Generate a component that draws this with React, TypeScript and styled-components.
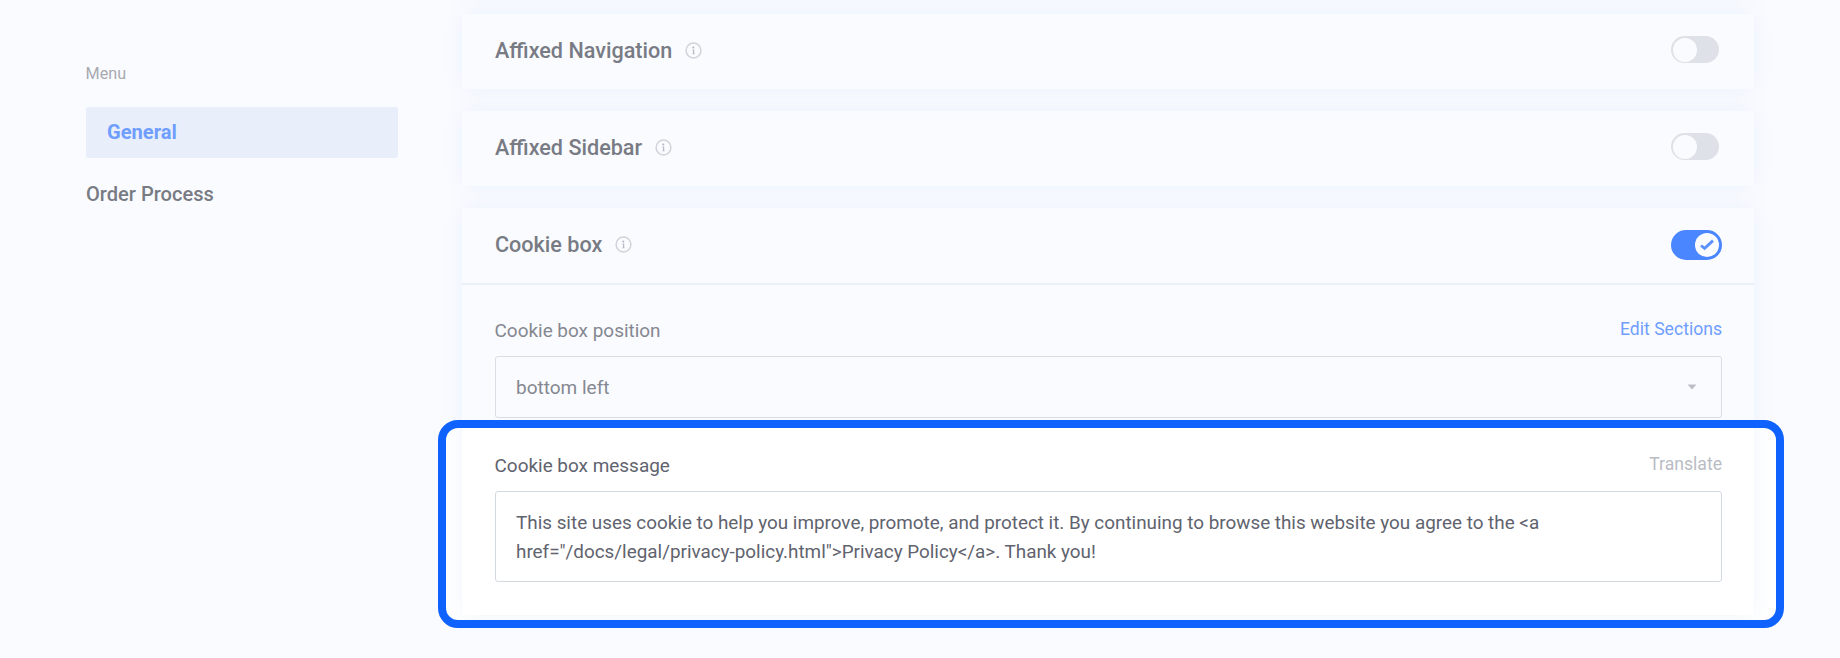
import React from 'react';
import styled, { createGlobalStyle } from 'styled-components';

const GlobalStyle = createGlobalStyle`
  * { box-sizing: border-box; }
  body { margin: 0; background: #fafbff; font-family: Roboto, "Liberation Sans", sans-serif; }
`;

const Page = styled.div`
  position: relative;
  z-index: 0;
  display: flex;
  width: 1840px;
  height: 658px;
  overflow: hidden;
  background: #fafbff;
`;

const Sidebar = styled.aside`
  display: flex;
  flex-direction: column;
  width: 398px;
  padding: 64px 0 0 86px;
`;

const MenuCaption = styled.div`
  margin-bottom: 23px;
  margin-left: -0.5px;
  font-size: 16.2px;
  line-height: 20px;
  color: #a8aab1;
`;

const MenuItem = styled.a<{ $active?: boolean }>`
  height: 51px;
  margin-bottom: 11px;
  padding-left: ${p => (p.$active ? 21 : 0)}px;
  border-radius: 2px;
  background: ${p => (p.$active ? '#e8effa' : 'transparent')};
  color: ${p => (p.$active ? '#6f9eff' : '#787b84')};
  font-size: 20.1px;
  font-weight: ${p => (p.$active ? 700 : 500)};
  line-height: 51px;
`;

const Content = styled.main`
  display: flex;
  flex-direction: column;
  gap: 22px;
  width: 1292px;
  margin: -83px 0 0 64px;
`;

const Card = styled.section`
  flex: none;
  min-height: 75px;
  border-radius: 2px;
  box-shadow: 0 0 20px rgba(190, 212, 242, 0.24);
`;

const CardHeader = styled.header`
  display: flex;
  align-items: center;
  height: 75px;
  padding: 0 32px 2px 33px;
`;

const Title = styled.h2`
  margin: 0 13px 0 0;
  color: #787b84;
  font-size: 21.6px;
  font-weight: 500;
  line-height: 28px;
`;

const InfoSvg = styled.svg`
  display: block;
  width: 17px;
  height: 17px;
`;

const Track = styled.span<{ $on?: boolean }>`
  display: flex;
  align-items: center;
  justify-content: ${p => (p.$on ? 'flex-end' : 'flex-start')};
  width: ${p => (p.$on ? 51 : 48)}px;
  height: ${p => (p.$on ? 30 : 27)}px;
  margin: ${p => (p.$on ? '0 0 0 auto' : '-2px 3px 0 auto')};
  padding: 0 ${p => (p.$on ? 3 : 2)}px;
  border-radius: 15px;
  background: ${p => (p.$on ? '#4a86ff' : '#dee1e7')};
`;

const Knob = styled.span`
  display: flex;
  align-items: center;
  justify-content: center;
  width: 24px;
  height: 24px;
  border-radius: 50%;
  background: #fafbff;
`;

const CardBody = styled.div`
  padding: 31px 32px 33px 33px;
  border-top: 2px solid #eaf0fa;
`;

const Field = styled.div`
  & + & { margin-top: 33px; }
`;

const FieldHead = styled.div`
  display: flex;
  align-items: center;
  justify-content: space-between;
  height: 30px;
  margin-bottom: 10px;
`;

const Label = styled.label<{ $strong?: boolean }>`
  margin-left: -0.5px;
  color: ${p => (p.$strong ? '#5f636e' : '#858890')};
  font-size: 18.95px;
  line-height: 30px;
`;

const Action = styled.a<{ $muted?: boolean }>`
  padding-bottom: 4px;
  color: ${p => (p.$muted ? '#b9bcc5' : '#6f9eff')};
  font-size: 17.6px;
  line-height: 26px;
`;

const Select = styled.div`
  display: flex;
  align-items: center;
  justify-content: space-between;
  height: 62px;
  padding: 0 24px 0 20px;
  border: 1px solid #d8dde6;
  border-radius: 3px;
  color: #858890;
  font-size: 19px;
`;

const MessageBox = styled.div`
  height: 91px;
  padding: 17px 20px 15px;
  border: 1px solid #d3d9e2;
  border-radius: 3px;
  color: #5f636e;
  font-size: 18.86px;
  line-height: 29.4px;
`;

const Highlight = styled.div`
  position: absolute;
  left: 438px;
  top: 420px;
  width: 1346px;
  height: 208px;
  border: 8px solid #0f62fe;
  border-radius: 20px;
  pointer-events: none;

  &::before {
    content: '';
    position: absolute;
    inset: 0;
    z-index: -1;
    border-radius: 12px;
    background: #fff;
  }
`;

const InfoIcon = () => (
  <InfoSvg viewBox="0 0 17 17" fill="none">
    <circle cx="8.5" cy="8.5" r="7.4" stroke="#d0d3da" strokeWidth="1.5" />
    <circle cx="8.3" cy="5.4" r="1" fill="#b2b5bd" />
    <path d="M7.4 8h1.2v3.8M7.6 11.6h1.9" stroke="#b8bbc3" strokeWidth="1.2" />
  </InfoSvg>
);

const Toggle = ({ on }: { on?: boolean }) => (
  <Track $on={on}>
    <Knob>
      {on && (
        <svg width="14" height="12" viewBox="0 0 14 12" fill="none">
          <path d="M1 6.5 4.6 9.4 13 1.6" stroke="#5c92ff" strokeWidth="2.8" />
        </svg>
      )}
    </Knob>
  </Track>
);

const Setting = ({ title, on, children }: { title: string; on?: boolean; children?: React.ReactNode }) => (
  <Card>
    <CardHeader>
      <Title>{title}</Title>
      <InfoIcon />
      <Toggle on={on} />
    </CardHeader>
    {children}
  </Card>
);

export default function App() {
  return (
    <>
      <GlobalStyle />
      <Page>
        <Sidebar>
          <MenuCaption>Menu</MenuCaption>
          <MenuItem $active>General</MenuItem>
          <MenuItem>Order Process</MenuItem>
        </Sidebar>
        <Content>
          <Card />
          <Setting title="Affixed Navigation" />
          <Setting title="Affixed Sidebar" />
          <Setting title="Cookie box" on>
            <CardBody>
              <Field>
                <FieldHead>
                  <Label>Cookie box position</Label>
                  <Action>Edit Sections</Action>
                </FieldHead>
                <Select>
                  bottom left
                  <svg width="10" height="6" viewBox="0 0 10 6">
                    <path d="M0.5 0.5h9L5 5.5Z" fill="#bcbfc6" />
                  </svg>
                </Select>
              </Field>
              <Field>
                <FieldHead>
                  <Label $strong>Cookie box message</Label>
                  <Action $muted>Translate</Action>
                </FieldHead>
                <MessageBox>
                  {'This site uses cookie to help you improve, promote, and protect it. By continuing to browse this website you agree to the <a href="/docs/legal/privacy-policy.html">Privacy Policy</a>. Thank you!'}
                </MessageBox>
              </Field>
            </CardBody>
          </Setting>
        </Content>
        <Highlight />
      </Page>
    </>
  );
}
